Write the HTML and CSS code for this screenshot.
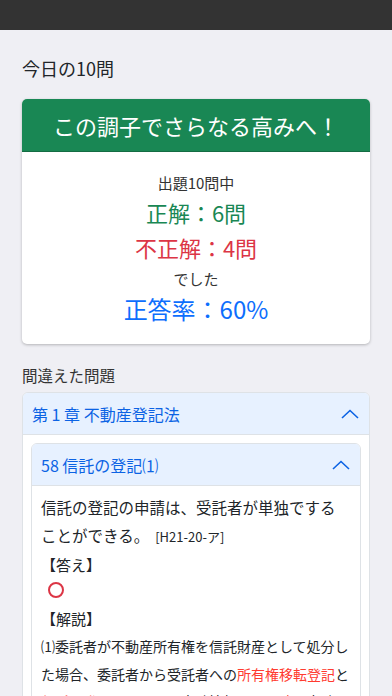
FILE: index.html
```html
<!DOCTYPE html>
<html>
	<head>
		<meta charset="UTF-8">
		<title>今日の10問</title>
		<link rel="stylesheet" href="styles.css">
	</head>
	<body>
		<div class="topBar"></div>
		<div class="main">
			<h2 class="title">今日の10問</h2>
			<div class="card">
				<div class="cardHead">この調子でさらなる高みへ！</div>
				<div class="cardBody">
					<p class="small">出題10問中</p>
					<p class="ok">正解：6問</p>
					<p class="ng">不正解：4問</p>
					<p class="small2">でした</p>
					<p class="rate">正答率：60%</p>
				</div>
			</div>
			<h3 class="subTitle">間違えた問題</h3>
			<div class="acc">
				<div class="accHead">
					<span>第 1 章 不動産登記法</span>
					<svg class="chev" width="18" height="10" viewBox="0 0 18 10"><path d="M1 9 L9 1.5 L17 9" fill="none" stroke="#0c63e4" stroke-width="1.6"/></svg>
				</div>
				<div class="accBody">
					<div class="acc inner">
						<div class="accHead">
							<span>58 信託の登記⑴</span>
							<svg class="chev" width="18" height="10" viewBox="0 0 18 10"><path d="M1 9 L9 1.5 L17 9" fill="none" stroke="#0c63e4" stroke-width="1.6"/></svg>
						</div>
						<div class="qBody">
							<p class="question">信託の登記の申請は、受託者が単独ですることができる。<span class="src">[H21-20-ア]</span></p>
							<p class="label">【答え】</p>
							<div class="maru"></div>
							<p class="label">【解説】</p>
							<p class="expl">⑴委託者が不動産所有権を信託財産として処分した場合、委託者から受託者への<span class="red">所有権移転登記</span>と<span class="red">信託の登記</span>を、<span class="red">同一</span>の申請情報で、<span class="red">同時</span>に申請する必要がある。⑵信託の登記は、受託者が単独で申請することができる。</p>
						</div>
					</div>
				</div>
			</div>
		</div>
	</body>
</html>
```
FILE: styles.css
```css
*{
	margin: 0;
	padding: 0;
}
body{
	background-color: #efeff4;
	font-family: "Noto Sans CJK JP", sans-serif;
	color: #212529;
}
.topBar{
	height: 30px;
	background-color: #333;
}
.main{
	padding: 0 22px 40px;
}
.title{
	font-size: 18px;
	font-weight: normal;
	line-height: 24px;
	margin-top: 26px;
	margin-bottom: 19px;
}
.card{
	background-color: white;
	border-radius: 5px;
	overflow: hidden;
	box-shadow: 0 1px 3px rgba(0,0,0,0.25);
}
.cardHead{
	height: 53px;
	line-height: 52px;
	background-color: #198754;
	color: white;
	font-size: 22px;
	text-align: center;
	border-bottom: 1px solid #146c43;
	box-sizing: border-box;
}
.cardBody{
	text-align: center;
	padding: 19px 0;
}
.small{
	font-size: 15px;
	line-height: 24px;
	color: #333;
}
.ok{
	font-size: 22px;
	line-height: 34px;
	color: #198754;
}
.ng{
	font-size: 22px;
	line-height: 36px;
	color: #dc3545;
}
.small2{
	font-size: 15px;
	line-height: 28px;
	color: #333;
}
.rate{
	font-size: 24px;
	line-height: 32px;
	color: #0d6efd;
}
.subTitle{
	font-size: 15.5px;
	font-weight: normal;
	line-height: 22px;
	margin-top: 20px;
	margin-bottom: 6px;
	color: #333;
}
.acc{
	border: 1px solid #dee2e6;
	border-radius: 6px;
	background-color: white;
	overflow: hidden;
}
.accHead{
	height: 41px;
	display: flex;
	align-items: center;
	justify-content: space-between;
	padding: 0 10px 0 9px;
	background-color: #e7f1ff;
	color: #0c63e4;
	font-size: 16px;
	border-bottom: 1px solid #dee2e6;
}
.accBody{
	padding: 8px;
}
.qBody{
	padding: 7px 5px 20px 9px;
}
.question{
	font-size: 15.5px;
	line-height: 28px;
	padding-right: 10px;
}
.src{
	font-size: 13px;
	margin-left: 6px;
}
.label{
	font-size: 15px;
	line-height: 28px;
}
.maru{
	width: 12px;
	height: 12px;
	border: 2px solid #dc3545;
	border-radius: 50%;
	margin: 3px 0 7px 7px;
}
.expl{
	font-size: 14px;
	line-height: 27.5px;
}
.red{
	color: #ff3b30;
}
```
